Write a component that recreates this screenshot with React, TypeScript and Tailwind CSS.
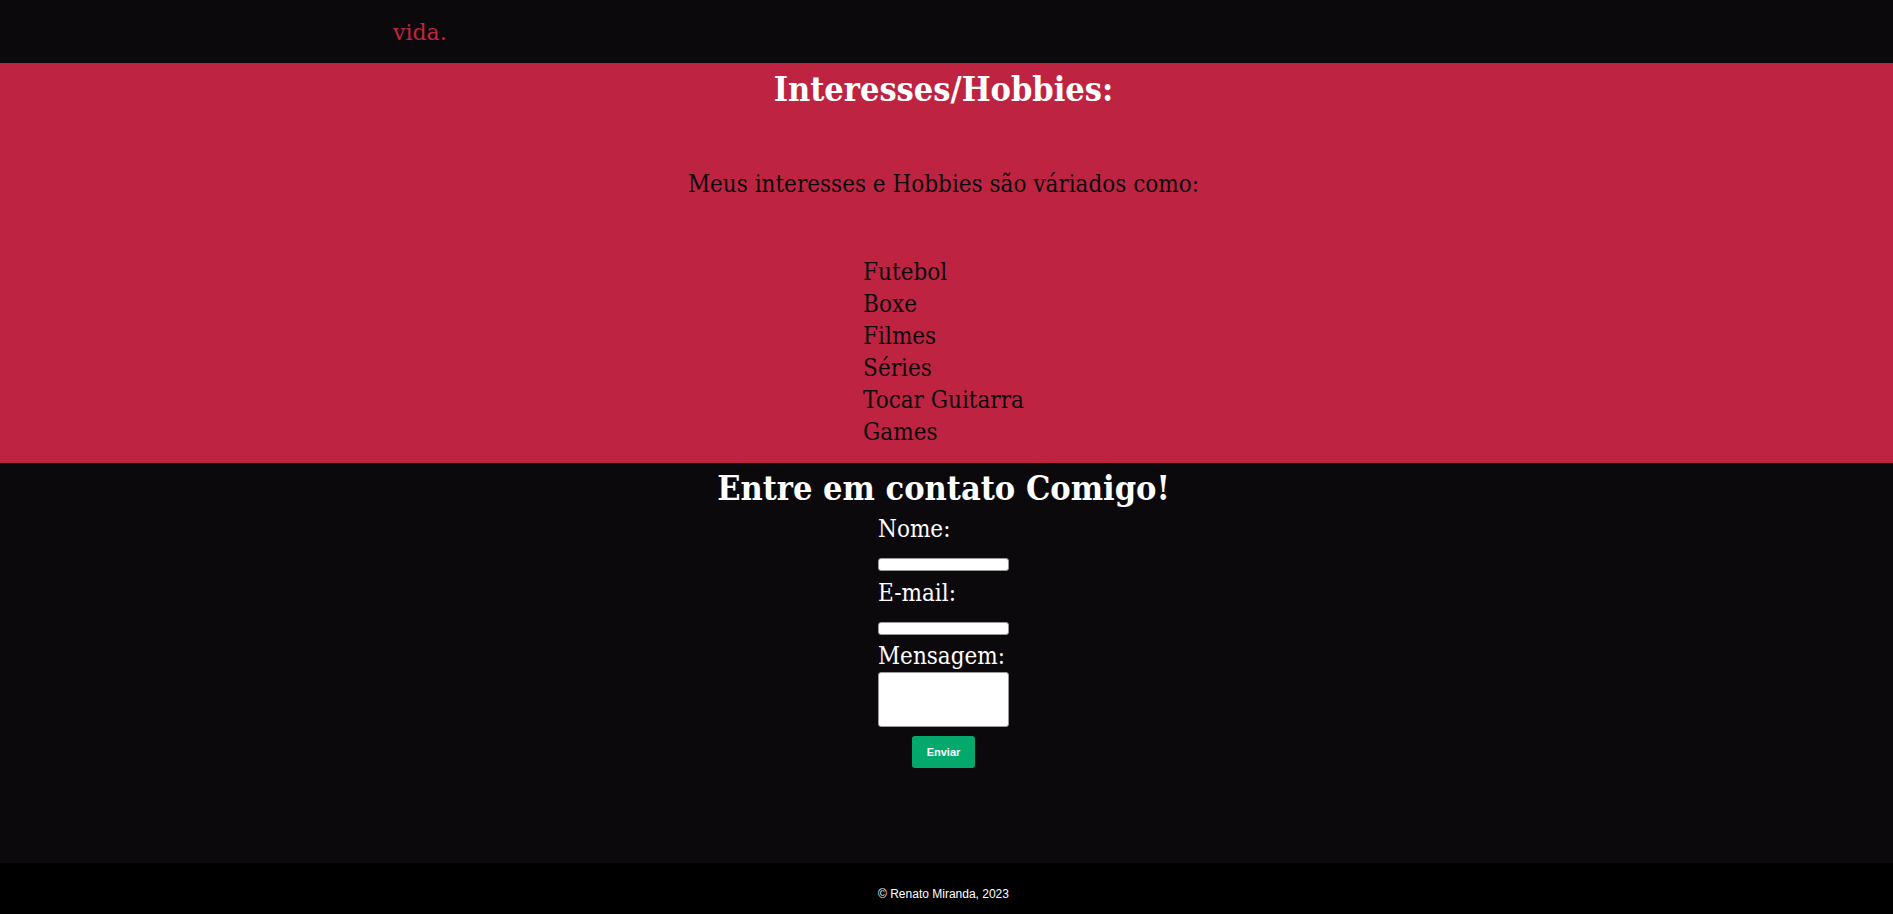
import React from 'react';

const hobbies = ['Futebol', 'Boxe', 'Filmes', 'Séries', 'Tocar Guitarra', 'Games'];

export default function App() {
  return (
    <div className="min-h-screen bg-[#0c090d] font-['DejaVu_Serif',serif]">
      {/* tail of the previous section */}
      <div className="h-[63px] bg-[#0c090d] pl-[393px] pt-[21px]">
        <p className="text-[22px] leading-[24px] text-[#c1253f]">vida.</p>
      </div>

      {/* Interesses */}
      <section className="h-[400px] bg-[#be2441] pr-[6px] font-stretch-condensed">
        <h1 className="text-center text-[34px] leading-[52px] font-bold text-white">Interesses/Hobbies:</h1>
        <p className="mt-[53px] text-center text-[24px] leading-[32px] text-[#0c090d]">
          Meus interesses e Hobbies são váriados como:
        </p>
        <ul className="mx-auto mt-[56px] w-fit text-[24px] leading-[32px] text-[#0c090d]">
          {hobbies.map((h) => (
            <li key={h}>{h}</li>
          ))}
        </ul>
      </section>

      {/* Contato */}
      <section className="h-[400px] bg-[#0c090d] pr-[6px] font-stretch-condensed">
        <h2 className="text-center text-[34px] leading-[50px] font-bold text-white">Entre em contato Comigo!</h2>
        <form className="mx-auto flex w-[131px] flex-col text-white" onSubmit={(e) => e.preventDefault()}>
          <label className="text-[24px] leading-[32px]">Nome:</label>
          <input type="text" className="mt-[13px] h-[13px] w-[131px] rounded-[3px] border border-[#999] bg-white" />
          <label className="mt-[6px] text-[24px] leading-[32px]">E-mail:</label>
          <input type="email" className="mt-[13px] h-[13px] w-[131px] rounded-[3px] border border-[#999] bg-white" />
          <label className="mt-[5px] text-[24px] leading-[32px]">Mensagem:</label>
          <textarea className="h-[55px] w-[131px] resize-none rounded-[3px] border border-[#999] bg-white" />
          <button
            type="submit"
            className="mx-auto mt-[9px] h-[32px] w-[63px] rounded-[3px] bg-[#03a96c] font-['Liberation_Sans',Arial,sans-serif] text-[11px] font-bold text-white"
          >
            Enviar
          </button>
        </form>
      </section>

      <footer className="h-[51px] bg-black pr-[6px] pt-[24px] text-center font-['Liberation_Sans',Arial,sans-serif] text-[12px] leading-[14px] text-white">
        © Renato Miranda, 2023
      </footer>
    </div>
  );
}
